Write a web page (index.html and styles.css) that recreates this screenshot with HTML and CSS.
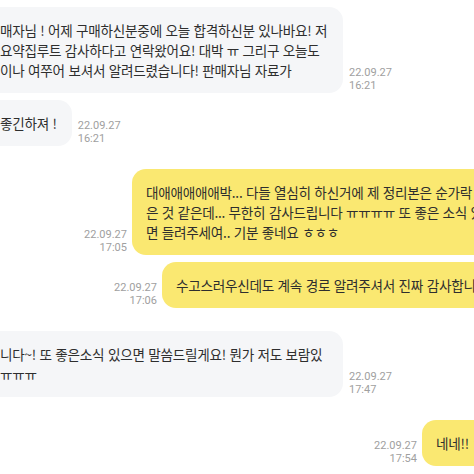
FILE: index.html
```html
<!DOCTYPE html>
<html lang="ko">
<head>
    <meta charset="UTF-8">
    <title>채팅</title>
    <link rel="stylesheet" href="styles.css">
</head>
<body>
<div class="chat">
    <!--상대방-->
    <div class="row them">
        <div class="bubble wide">매자님 ! 어제 구매하신분중에 오늘 합격하신분 있나바요! 저<br>요약집루트 감사하다고 연락왔어요! 대박 ㅠ 그리구 오늘도<br>이나 여쭈어 보셔서 알려드렸습니다! 판매자님 자료가</div>
        <div class="time">22.09.27<br>16:21</div>
    </div>
    <div class="row them next">
        <div class="bubble">좋긴하져 !</div>
        <div class="time">22.09.27<br>16:21</div>
    </div>
    <!--나-->
    <div class="row me me-long">
        <div class="time">22.09.27<br>17:05</div>
        <div class="bubble">대애애애애애박... 다들 열심히 하신거에 제 정리본은 순가락<br>은 것 같은데... 무한히 감사드립니다 ㅠㅠㅠㅠ 또 좋은 소식 있으<br>면 들려주세여.. 기분 좋네요 ㅎㅎㅎ</div>
    </div>
    <div class="row me me-mid next">
        <div class="time">22.09.27<br>17:06</div>
        <div class="bubble">수고스러우신데도 계속 경로 알려주셔서 진짜 감사합니다</div>
    </div>
    <!--상대방-->
    <div class="row them">
        <div class="bubble wide">니다~! 또 좋은소식 있으면 말씀드릴게요! 뭔가 저도 보람있<br>ㅠㅠㅠ</div>
        <div class="time">22.09.27<br>17:47</div>
    </div>
    <!--나-->
    <div class="row me me-short">
        <div class="time">22.09.27<br>17:54</div>
        <div class="bubble">네네!! ㅎㅎ</div>
    </div>
</div>
</body>
</html>
```
FILE: styles.css
```css
html, body{
    margin: 0;
    padding: 0;
    background-color: white;
    overflow: hidden;
}
.chat{
    width: 474px;
    height: 474px;
    padding-top: 7px;
    box-sizing: border-box;
    font-family: "Noto Sans CJK KR", "Noto Sans", sans-serif;
}
.row{
    display: flex;
    align-items: flex-end;
    gap: 6px;
    margin-top: 23px;
}
.row:first-child{
    margin-top: 0;
}
.row.next{
    margin-top: 7px;
}
.bubble{
    flex-shrink: 0;
    white-space: nowrap;
    padding: 13px 15px 13px 14px;
    border-radius: 14px;
    font-size: 13.6px;
    line-height: 20px;
    letter-spacing: -0.25px;
    color: #2e2e2e;
}
.them .bubble{
    margin-left: -14px;
    background-color: #f5f6f8;
}
.them .bubble.wide{
    box-sizing: border-box;
    width: 357px;
}
.me .bubble{
    background-color: #fae871;
}
.time{
    flex-shrink: 0;
    font-family: Roboto, "Noto Sans", sans-serif;
    font-size: 11px;
    line-height: 13px;
    color: #a0a0a0;
    padding-bottom: 1px;
}
.me{
    gap: 5px;
}
.me .time{
    text-align: right;
}
.me-long .time{
    width: 127px;
}
.me-mid .time{
    width: 157px;
}
.me-short .time{
    width: 417px;
}
```
